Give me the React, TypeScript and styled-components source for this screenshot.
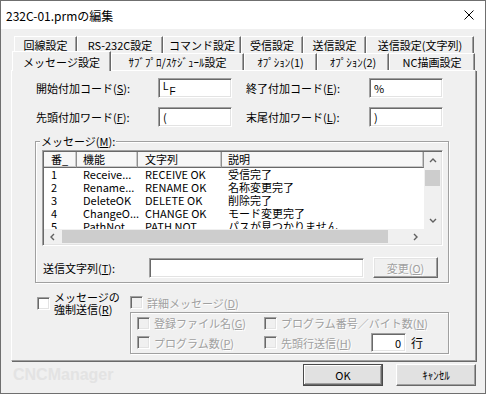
import React from 'react'
import styled, { createGlobalStyle, css } from 'styled-components'

const GlobalStyle = createGlobalStyle`
  html, body {
    margin: 0;
    padding: 0;
    background: #ffffff;
  }
  body {
    font-family: "Noto Sans CJK JP", "Liberation Sans", sans-serif;
    font-size: 11px;
    color: #000000;
  }
  * {
    box-sizing: border-box;
  }
`

// classic 3D edges
const sunken = css`
  border: 1px solid;
  border-color: #a0a0a0 #ffffff #ffffff #a0a0a0;
  box-shadow: inset 1px 1px 0 #696969, inset -1px -1px 0 #e3e3e3;
`
const raised = css`
  border: 1px solid;
  border-color: #ffffff #696969 #696969 #ffffff;
  box-shadow: inset -1px -1px 0 #a0a0a0, inset 1px 1px 0 #e3e3e3;
`
const disabledText = css`
  color: #a0a0a0;
  text-shadow: 1px 1px 0 #ffffff;
`

const Window = styled.div`
  width: 486px;
  height: 394px;
  border: 1px solid #6f6f6f;
  background: #f0f0f0;
  display: flex;
  flex-direction: column;
`
const TitleBar = styled.div`
  height: 28px;
  background: #ffffff;
  display: flex;
  align-items: center;
  justify-content: space-between;
  padding: 0 11px 0 5px;
  font-size: 12px;
`
const Body = styled.div`
  padding: 7px 9px 0 10px;
`
const TabRow = styled.div<{ $offset: number }>`
  display: flex;
  height: 17px;
  margin-left: ${p => p.$offset}px;
`
const Tab = styled.div<{ $w: number; $active?: boolean }>`
  width: ${p => p.$w}px;
  height: 17px;
  display: flex;
  align-items: center;
  justify-content: center;
  white-space: nowrap;
  background: #f0f0f0;
  border-top: 1px solid #ffffff;
  border-left: 1px solid #ffffff;
  border-right: 1px solid #696969;
  box-shadow: inset -1px 0 0 #a0a0a0;
  ${p =>
    p.$active &&
    css`
      height: 20px;
      margin-top: -2px;
      position: relative;
      z-index: 1;
    `}
`
const Panel = styled.div`
  height: 291px;
  border: 1px solid;
  border-color: #ffffff #a0a0a0 #a0a0a0 #ffffff;
  box-shadow: 1px 1px 0 #696969;
`
const FieldGrid = styled.div`
  display: grid;
  grid-template-columns: 122px 74px 137px 74px;
  grid-auto-rows: 20px;
  row-gap: 9px;
  align-items: center;
  margin: 7px 0 0 24px;
`
const FieldLabel = styled.span<{ $indent?: number }>`
  padding-left: ${p => p.$indent || 0}px;
  white-space: nowrap;
`
const TextBox = styled.div<{ $w?: number; $right?: boolean }>`
  ${sunken};
  width: ${p => (p.$w ? `${p.$w}px` : '100%')};
  height: 20px;
  background: #ffffff;
  padding: 0 4px;
  display: flex;
  align-items: center;
  justify-content: ${p => (p.$right ? 'flex-end' : 'flex-start')};
  white-space: nowrap;
`
const U = styled.span`
  text-decoration: underline;
`
const LfMark = styled.span`
  font-family: "Liberation Sans", sans-serif;
  font-size: 10px;
  display: inline-flex;
  align-items: flex-start;
  height: 15px;
`
const LfLow = styled.span`
  margin-top: 5px;
  margin-left: 1px;
`
const GroupBox = styled.div<{ $w: number }>`
  position: relative;
  width: ${p => p.$w}px;
  border: 1px solid #a0a0a0;
  box-shadow: inset 1px 1px 0 #ffffff, 1px 1px 0 #ffffff;
`
const MessageGroup = styled(GroupBox)`
  margin: 14px 0 0 23px;
  height: 142px;
  padding: 8px 0 0 6px;
`
const GroupLabel = styled.span`
  position: absolute;
  top: -8px;
  left: 4px;
  padding: 0 1px;
  background: #f0f0f0;
  line-height: 14px;
`
const ListView = styled.div`
  ${sunken};
  width: 401px;
  height: 96px;
  padding: 1px;
  background: #ffffff;
  display: grid;
  grid-template-columns: 1fr 17px;
  grid-template-rows: 1fr 15px;
`
const ListBody = styled.div`
  overflow: hidden;
  display: grid;
  grid-template-columns: 33px 61px 84px 1fr;
  grid-auto-rows: 13px;
  grid-template-rows: 16px;
`
const HeaderCell = styled.div<{ $pad: number }>`
  height: 16px;
  padding-left: ${p => p.$pad}px;
  background: #f7f7f7;
  border-right: 1px solid #8f8f8f;
  border-bottom: 1px solid #696969;
  box-shadow: inset -1px -1px 0 #c8c8c8;
  line-height: 14px;
  white-space: nowrap;
`
const Cell = styled.div<{ $pad: number }>`
  padding-left: ${p => p.$pad}px;
  line-height: 13px;
  white-space: nowrap;
`
const VScroll = styled.div`
  display: flex;
  flex-direction: column;
  background: #f0f0f0;
`
const HScroll = styled.div`
  display: flex;
  background: #f0f0f0;
`
const ScrollCorner = styled.div`
  background: #f0f0f0;
`
const ArrowBtn = styled.div`
  flex: 0 0 17px;
  display: flex;
  align-items: center;
  justify-content: center;
`
const Track = styled.div<{ $vertical?: boolean }>`
  flex: 1;
  display: flex;
  flex-direction: ${p => (p.$vertical ? 'column' : 'row')};
`
const Thumb = styled.div<{ $vertical?: boolean; $len: number }>`
  background: #cdcdcd;
  ${p =>
    p.$vertical
      ? css`
          height: ${p.$len}px;
          margin: 1px 1px 0;
        `
      : css`
          width: ${p.$len}px;
          margin: 1px 0 1px 1px;
        `}
`
const SendRow = styled.div`
  display: flex;
  align-items: center;
  margin: 11px 0 0 1px;
`
const SendLabel = styled.span`
  width: 106px;
`
const PushButton = styled.div<{ $w: number; $disabled?: boolean; $default?: boolean }>`
  ${raised};
  width: ${p => p.$w}px;
  height: 22px;
  display: flex;
  align-items: center;
  justify-content: center;
  background: #e1e1e1;
  ${p => p.$disabled && disabledText};
  ${p =>
    p.$default &&
    css`
      border-color: #4a4a4a;
      box-shadow: inset -1px -1px 0 #696969, inset 1px 1px 0 #ffffff, inset -2px -2px 0 #a0a0a0;
    `}
`
const ChangeButton = styled(PushButton)`
  height: 21px;
  margin-left: 9px;
  background: #f0f0f0;
`
const BottomRow = styled.div`
  display: flex;
  margin: 9px 0 0 25px;
`
const ForceOption = styled.div`
  width: 93px;
  display: flex;
  gap: 4px;
`
const ForceLabel = styled.span`
  line-height: 12px;
  margin-top: -1px;
`
const CheckBox = styled.span<{ $disabled?: boolean; $top?: number }>`
  flex: 0 0 13px;
  width: 13px;
  height: 13px;
  margin-top: ${p => p.$top || 0}px;
  border: 1px solid;
  border-color: #a0a0a0 #ffffff #ffffff #a0a0a0;
  box-shadow: inset 1px 1px 0 #696969, inset -1px -1px 0 #e3e3e3;
  background: ${p => (p.$disabled ? '#f0f0f0' : '#ffffff')};
`
const DetailColumn = styled.div`
  display: flex;
  flex-direction: column;
`
const CheckRow = styled.div<{ $disabled?: boolean }>`
  display: flex;
  align-items: center;
  gap: 4px;
  white-space: nowrap;
  ${p => p.$disabled && disabledText};
`
const DetailRow = styled(CheckRow)`
  height: 13px;
  margin-top: 4px;
`
const InnerBox = styled(GroupBox)`
  margin-top: 3px;
  padding: 3px 0 1px 6px;
  display: grid;
  grid-template-columns: 127px 1fr;
  grid-template-rows: 14px 19px;
  row-gap: 3px;
  align-items: center;
`
const HeadLabel = styled.span`
  width: 86px;
`
const LineBox = styled(TextBox)`
  height: 19px;
  text-shadow: none;
  color: #000000;
`
const LineUnit = styled.span`
  margin-left: 1px;
  color: #000000;
  text-shadow: none;
  font-size: 12px;
`
const Footer = styled.div`
  height: 25px;
  display: flex;
  align-items: center;
  padding: 3px 9px 0 12px;
  gap: 13px;
`
const Watermark = styled.span`
  font-family: "Liberation Sans", sans-serif;
  font-weight: bold;
  font-size: 16px;
  color: #e3e3e3;
  margin-right: auto;
`

const CloseIcon = () => (
  <svg width="10" height="10" viewBox="0 0 10 10">
    <path d="M0.5 0.5 L9.5 9.5 M9.5 0.5 L0.5 9.5" stroke="#000" strokeWidth="1" />
  </svg>
)

const Chevron = ({ dir }: { dir: 'up' | 'down' | 'left' | 'right' }) => {
  const pts = {
    up: '1,5 4,2 7,5',
    down: '1,2 4,5 7,2',
    left: '5,1 2,4 5,7',
    right: '2,1 5,4 2,7'
  }[dir]
  return (
    <svg width="8" height="8" viewBox="0 0 8 8">
      <polyline points={pts} fill="none" stroke="#606060" strokeWidth="1.4" />
    </svg>
  )
}

const row1Tabs = [
  { label: '回線設定', w: 63 },
  { label: 'RS-232C設定', w: 86 },
  { label: 'コマンド設定', w: 78 },
  { label: '受信設定', w: 62 },
  { label: '送信設定', w: 63 },
  { label: '送信設定(文字列)', w: 108 }
]
const row2Tabs = [
  { label: 'メッセージ設定', w: 99, active: true },
  { label: 'ｻﾌﾞﾌﾟﾛ/ｽｹｼﾞｭｰﾙ設定', w: 133 },
  { label: 'ｵﾌﾟｼｮﾝ(1)', w: 73 },
  { label: 'ｵﾌﾟｼｮﾝ(2)', w: 72 },
  { label: 'NC描画設定', w: 86 }
]

const messages = [
  ['1', 'Receive...', 'RECEIVE OK', '受信完了'],
  ['2', 'Rename...', 'RENAME OK', '名称変更完了'],
  ['3', 'DeleteOK', 'DELETE OK', '削除完了'],
  ['4', 'ChangeO...', 'CHANGE OK', 'モード変更完了'],
  ['5', 'PathNot...', 'PATH NOT ...', 'パスが見つかりません']
]
const colPad = [7, 6, 7, 6]

const App = () => {
  return (
    <>
      <GlobalStyle />
      <Window>
        <TitleBar>
          <span>232C-01.prmの編集</span>
          <CloseIcon />
        </TitleBar>
        <Body>
          <TabRow $offset={3}>
            {row1Tabs.map(t => (
              <Tab key={t.label} $w={t.w}>{t.label}</Tab>
            ))}
          </TabRow>
          <TabRow $offset={1}>
            {row2Tabs.map(t => (
              <Tab key={t.label} $w={t.w} $active={t.active}>{t.label}</Tab>
            ))}
          </TabRow>
          <Panel>
            <FieldGrid>
              <FieldLabel>開始付加コード(<U>S</U>):</FieldLabel>
              <TextBox>
                <LfMark>L<LfLow>F</LfLow></LfMark>
              </TextBox>
              <FieldLabel $indent={14}>終了付加コード(<U>E</U>):</FieldLabel>
              <TextBox>%</TextBox>
              <FieldLabel>先頭付加ワード(<U>F</U>):</FieldLabel>
              <TextBox>(</TextBox>
              <FieldLabel $indent={14}>末尾付加ワード(<U>L</U>):</FieldLabel>
              <TextBox>)</TextBox>
            </FieldGrid>

            <MessageGroup $w={414}>
              <GroupLabel>メッセージ(<U>M</U>):</GroupLabel>
              <ListView>
                <ListBody>
                  <HeaderCell $pad={7}>番_</HeaderCell>
                  <HeaderCell $pad={6}>機能</HeaderCell>
                  <HeaderCell $pad={7}>文字列</HeaderCell>
                  <HeaderCell $pad={6}>説明</HeaderCell>
                  {messages.map(row =>
                    row.map((text, i) => (
                      <Cell key={row[0] + i} $pad={colPad[i]}>{text}</Cell>
                    ))
                  )}
                </ListBody>
                <VScroll>
                  <ArrowBtn><Chevron dir="up" /></ArrowBtn>
                  <Track $vertical>
                    <Thumb $vertical $len={16} />
                  </Track>
                  <ArrowBtn><Chevron dir="down" /></ArrowBtn>
                </VScroll>
                <HScroll>
                  <ArrowBtn><Chevron dir="left" /></ArrowBtn>
                  <Track>
                    <Thumb $len={326} />
                  </Track>
                  <ArrowBtn><Chevron dir="right" /></ArrowBtn>
                </HScroll>
                <ScrollCorner />
              </ListView>
              <SendRow>
                <SendLabel>送信文字列(<U>T</U>):</SendLabel>
                <TextBox $w={215} />
                <ChangeButton $w={65} $disabled>
                  <span>変更(<U>O</U>)</span>
                </ChangeButton>
              </SendRow>
            </MessageGroup>

            <BottomRow>
              <ForceOption>
                <CheckBox $top={5} />
                <ForceLabel>
                  メッセージの
                  <br />
                  強制送信(<U>R</U>)
                </ForceLabel>
              </ForceOption>
              <DetailColumn>
                <DetailRow $disabled>
                  <CheckBox $disabled />
                  <span>詳細メッセージ(<U>D</U>)</span>
                </DetailRow>
                <InnerBox $w={319}>
                  <CheckRow $disabled>
                    <CheckBox $disabled />
                    <span>登録ファイル名(<U>G</U>)</span>
                  </CheckRow>
                  <CheckRow $disabled>
                    <CheckBox $disabled />
                    <span>プログラム番号／バイト数(<U>N</U>)</span>
                  </CheckRow>
                  <CheckRow $disabled>
                    <CheckBox $disabled />
                    <span>プログラム数(<U>P</U>)</span>
                  </CheckRow>
                  <CheckRow $disabled>
                    <CheckBox $disabled />
                    <HeadLabel>先頭行送信(<U>H</U>)</HeadLabel>
                    <LineBox $w={35} $right>0</LineBox>
                    <LineUnit>行</LineUnit>
                  </CheckRow>
                </InnerBox>
              </DetailColumn>
            </BottomRow>
          </Panel>
        </Body>
        <Footer>
          <Watermark>CNCManager</Watermark>
          <PushButton $w={80} $default>OK</PushButton>
          <PushButton $w={80}>ｷｬﾝｾﾙ</PushButton>
        </Footer>
      </Window>
    </>
  )
}

export default App
